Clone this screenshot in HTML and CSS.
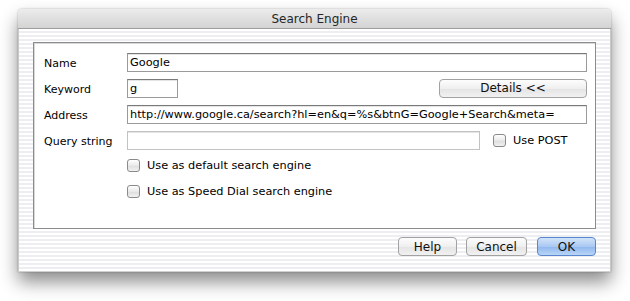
FILE: index.html
```html
<!DOCTYPE html>
<html lang="en">
<head>
  <meta charset="UTF-8">
  <title>Search Engine</title>
  <link rel="stylesheet" href="styles.css">
</head>
<body>
  <div class="window">
    <div class="titlebar">Search Engine</div>
    <div class="body">
      <div class="panel">
        <div class="form">
          <label class="label">Name</label>
          <div class="field"><input class="text wide" type="text" value="Google"></div>

          <label class="label">Keyword</label>
          <div class="field split">
            <input class="text short" type="text" value="g">
            <button class="btn details">Details &lt;&lt;</button>
          </div>

          <label class="label">Address</label>
          <div class="field"><input class="text wide" type="text" value="http://www.google.ca/search?hl=en&amp;q=%s&amp;btnG=Google+Search&amp;meta="></div>

          <label class="label">Query string</label>
          <div class="field">
            <input class="text query" type="text" value="">
            <span class="check post"><span class="box"></span>Use POST</span>
          </div>
        </div>
        <div class="options">
          <span class="check"><span class="box"></span>Use as default search engine</span>
          <span class="check"><span class="box"></span>Use as Speed Dial search engine</span>
        </div>
      </div>
      <div class="buttons">
        <button class="btn">Help</button>
        <button class="btn cancel">Cancel</button>
        <button class="btn default">OK</button>
      </div>
    </div>
  </div>
</body>
</html>
```

FILE: styles.css
```css
* {
    box-sizing: border-box;
}

html {
    min-height: 301px;
    background: #ffffff;
}

body {
    margin: 0;
    min-height: 301px;
    padding: 9px 0 0 18px;
    background: #ffffff;
    font-family: "DejaVu Sans", "Liberation Sans", sans-serif;
    font-size: 11px;
    color: #000000;
}

.window {
    width: 593px;
    height: 263px;
    border-radius: 4px 4px 0 0;
    box-shadow: 0 10px 18px rgba(0, 0, 0, 0.45), 0 0 2px rgba(0, 0, 0, 0.3);
    background: #ffffff;
    display: flex;
    flex-direction: column;
}

.titlebar {
    height: 20px;
    line-height: 20px;
    text-align: center;
    font-size: 12px;
    color: #262626;
    background: linear-gradient(#ececec, #d3d3d3);
    border-bottom: 1px solid #9d9d9d;
    border-radius: 4px 4px 0 0;
}

.body {
    flex: 1;
    padding: 13px 14px 0 14px;
    background: repeating-linear-gradient(#ffffff 0 2px, #eceef1 2px 4px);
    border-left: 1px solid #c8c8c8;
    border-right: 1px solid #c8c8c8;
    border-bottom: 1px solid #d0d0d0;
}

.panel {
    height: 187px;
    background: #ffffff;
    border: 1px solid #8c8c8c;
    box-shadow: inset 1px 1px 0 #d8d8d8;
    padding: 9px 8px 0 10px;
}

.form {
    display: grid;
    grid-template-columns: 83px 1fr;
    row-gap: 6px;
}

.label {
    height: 20px;
    line-height: 20px;
    padding-top: 2px;
}

.field {
    display: flex;
    align-items: center;
    height: 20px;
}

.split {
    justify-content: space-between;
}

.text {
    height: 19px;
    padding: 0 2px;
    font-family: inherit;
    font-size: 11.3px;
    border: 1px solid #9a9a9a;
    border-top-color: #7a7a7a;
    box-shadow: inset 0 1px 0 #e4e4e4;
    background: #ffffff;
    outline: none;
}

.wide {
    width: 460px;
}

.short {
    width: 51px;
}

.query {
    width: 353px;
    border-color: #c2c2c2;
}

.btn {
    height: 19px;
    padding: 0;
    font-family: inherit;
    font-size: 11px;
    color: #111111;
    border: 1px solid #a2a2a2;
    border-radius: 4px;
    background: linear-gradient(#fdfdfd, #efefef 50%, #e4e4e4 51%, #f1f1f1);
}

.details {
    width: 148px;
    font-size: 12px;
}

.check {
    display: flex;
    align-items: center;
    height: 14px;
    font-size: 11.3px;
}

.box {
    width: 13px;
    height: 13px;
    margin-right: 7px;
    border: 1px solid #8a8a8a;
    border-radius: 3px;
    background: linear-gradient(#ffffff, #e9e9e9 50%, #dcdcdc 51%, #f2f2f2);
}

.post {
    margin-left: 13px;
}

.options {
    display: flex;
    flex-direction: column;
    gap: 12px;
    padding: 8px 0 0 83px;
}

.buttons {
    display: flex;
    justify-content: flex-end;
    gap: 9px;
    padding: 8px 0 0;
}

.buttons .btn {
    width: 59px;
    font-size: 12px;
}

.buttons .cancel {
    width: 61px;
}

.buttons .default {
    margin-left: 1px;
    border-color: #5a86cf;
    background: linear-gradient(#d3e4f9, #a9c9f2 50%, #8fb7ee 51%, #b9d5f7);
}
```
